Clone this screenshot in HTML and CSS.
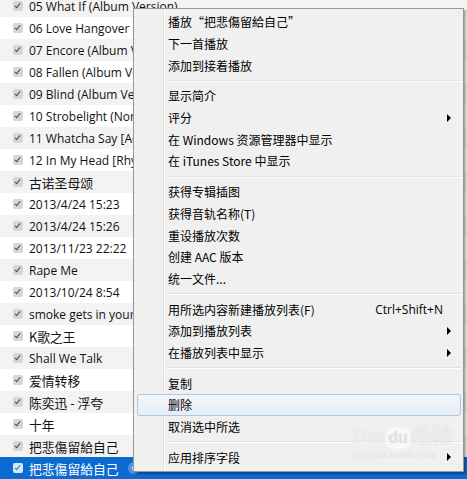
FILE: index.html
```html
<!DOCTYPE html>
<html lang="zh-CN">
  <head>
    <meta charset="UTF-8" />
    <meta name="viewport" content="width=device-width, initial-scale=1.0" />
    <title>iTunes</title>
    <link rel="stylesheet" href="styles.css">
  </head>
  <body>
    <section class="track-list">
      <div class="track"><span class="check"></span><span class="track-name">05 What If (Album Version)</span></div>
      <div class="track"><span class="check"></span><span class="track-name">06 Love Hangover (Album Version)</span></div>
      <div class="track"><span class="check"></span><span class="track-name">07 Encore (Album Version)</span></div>
      <div class="track"><span class="check"></span><span class="track-name">08 Fallen (Album Version)</span></div>
      <div class="track"><span class="check"></span><span class="track-name">09 Blind (Album Version)</span></div>
      <div class="track"><span class="check"></span><span class="track-name">10 Strobelight (Non-Album Track)</span></div>
      <div class="track"><span class="check"></span><span class="track-name">11 Whatcha Say [Acoustic]</span></div>
      <div class="track"><span class="check"></span><span class="track-name">12 In My Head [Rhythm]</span></div>
      <div class="track"><span class="check"></span><span class="track-name cjk">古诺圣母颂</span></div>
      <div class="track"><span class="check"></span><span class="track-name">2013/4/24 15:23</span></div>
      <div class="track"><span class="check"></span><span class="track-name">2013/4/24 15:26</span></div>
      <div class="track"><span class="check"></span><span class="track-name">2013/11/23 22:22</span></div>
      <div class="track"><span class="check"></span><span class="track-name">Rape Me</span></div>
      <div class="track"><span class="check"></span><span class="track-name">2013/10/24 8:54</span></div>
      <div class="track"><span class="check"></span><span class="track-name">smoke gets in your eyes</span></div>
      <div class="track"><span class="check"></span><span class="track-name cjk">K歌之王</span></div>
      <div class="track"><span class="check"></span><span class="track-name">Shall We Talk</span></div>
      <div class="track"><span class="check"></span><span class="track-name cjk">爱情转移</span></div>
      <div class="track"><span class="check"></span><span class="track-name cjk">陈奕迅 - 浮夸</span></div>
      <div class="track"><span class="check"></span><span class="track-name cjk">十年</span></div>
      <div class="track"><span class="check"></span><span class="track-name cjk">把悲傷留給自己</span></div>
      <div class="track selected"><span class="check"></span><span class="track-name cjk">把悲傷留給自己</span><span class="more-dot"></span></div>
    </section>

    <div class="context-menu">
      <div class="menu-item">播放“把悲傷留給自己”</div>
      <div class="menu-item">下一首播放</div>
      <div class="menu-item">添加到接着播放</div>
      <div class="menu-sep"></div>
      <div class="menu-item">显示简介</div>
      <div class="menu-item has-sub">评分</div>
      <div class="menu-item">在 Windows 资源管理器中显示</div>
      <div class="menu-item">在 iTunes Store 中显示</div>
      <div class="menu-sep"></div>
      <div class="menu-item">获得专辑插图</div>
      <div class="menu-item">获得音轨名称(T)</div>
      <div class="menu-item">重设播放次数</div>
      <div class="menu-item">创建 AAC 版本</div>
      <div class="menu-item">统一文件...</div>
      <div class="menu-sep"></div>
      <div class="menu-item">用所选内容新建播放列表(F)<span class="shortcut">Ctrl+Shift+N</span></div>
      <div class="menu-item has-sub">添加到播放列表</div>
      <div class="menu-item has-sub">在播放列表中显示</div>
      <div class="menu-sep"></div>
      <div class="menu-item">复制</div>
      <div class="menu-item hover">删除</div>
      <div class="menu-item">取消选中所选</div>
      <div class="menu-sep"></div>
      <div class="menu-item has-sub">应用排序字段</div>
    </div>

    <!-- watermark -->
    <div class="watermark">
      <div class="wm-logo">Bai<span class="wm-du">du</span>经验</div>
      <div class="wm-url">jingyan.baidu.com</div>
    </div>
  </body>
</html>
```

FILE: styles.css
```css
body {
  margin: 0;
  width: 467px;
  height: 479px;
  overflow: hidden;
  position: relative;
  background: #fff;
  font-family: "Open Sans", "Noto Sans CJK SC", sans-serif;
  color: #111;
}

.track-list {
  display: flex;
  flex-direction: column;
  margin-top: -5px;
}

.track {
  height: 22px;
  display: flex;
  align-items: center;
  padding-left: 13px;
  gap: 6px;
  font-size: 12px;
  background: #fff;
  white-space: nowrap;
}

.track:nth-child(odd) {
  background: #f3f3f3;
}

.track-name.cjk {
  font-family: "Noto Sans CJK SC", sans-serif;
  font-size: 12.8px;
}

.check {
  width: 10px;
  height: 10px;
  border-radius: 2px;
  background: #d6d6d6;
  position: relative;
  flex: none;
}

/* check mark */
.check::after {
  content: "";
  position: absolute;
  left: 3px;
  top: 1px;
  width: 2px;
  height: 5px;
  border: solid #4a4a4a;
  border-width: 0 1.5px 1.5px 0;
  transform: rotate(40deg);
}

.track.selected {
  background: #0b6bd3;
  color: #fff;
}

.track.selected .check {
  background: #d7e6f8;
}

.track.selected .check::after {
  border-color: #2a6fc4;
}

.more-dot {
  width: 12px;
  height: 12px;
  border-radius: 50%;
  background: #4f95e6;
  margin-left: 3px;
  position: relative;
}

.more-dot::after {
  content: "";
  position: absolute;
  left: 4px;
  top: 4px;
  width: 4px;
  height: 4px;
  border-radius: 50%;
  background: #e8f2ff;
}

.context-menu {
  position: absolute;
  left: 133px;
  top: 8px;
  width: 325px;
  height: 458px;
  padding: 2px;
  border: 1px solid #979797;
  background-color: #f0f0f0;
  background-image: linear-gradient(to right, transparent 29px, #e2e3e3 29px, #e2e3e3 30px, #fff 30px, #fff 31px, transparent 31px);
  box-shadow: 2px 2px 2px rgba(0, 0, 0, 0.35);
  font-family: "Noto Sans CJK SC", sans-serif;
  font-size: 12px;
  color: #000;
}

.menu-item {
  height: 21.7px;
  display: flex;
  align-items: center;
  padding-left: 32px;
  padding-right: 18px;
  position: relative;
  white-space: nowrap;
  box-sizing: border-box;
}

.menu-item.has-sub::after {
  content: "";
  position: absolute;
  right: 10px;
  top: 7px;
  border-left: 4px solid #000;
  border-top: 4px solid transparent;
  border-bottom: 4px solid transparent;
}

.shortcut {
  margin-left: auto;
  font-family: "Open Sans", sans-serif;
  margin-right: 0;
}

.menu-item.hover {
  background: linear-gradient(#f3f6fb, #e6edf6);
  border: 1px solid #aec6e2;
  border-radius: 3px;
  margin-left: 1px;
  padding-left: 30px;
}

.menu-sep {
  height: 9px;
  margin-left: 30px;
  background: linear-gradient(transparent 4px, #e0e0e0 4px, #e0e0e0 5px, #fff 5px, #fff 6px, transparent 6px);
}

.watermark {
  position: absolute;
  left: 353px;
  top: 425px;
  color: rgba(255, 255, 255, 0.7);
  text-shadow: 0 0 1px rgba(0, 0, 0, 0.18);
  pointer-events: none;
}

.wm-logo {
  font-family: "Liberation Sans", sans-serif;
  font-weight: bold;
  font-size: 20px;
  line-height: 22px;
}

.wm-du {
  display: inline-block;
  background: rgba(255, 255, 255, 0.55);
  color: rgba(230, 230, 230, 0.9);
  border-radius: 8px;
  padding: 0 2px;
  margin: 0 2px;
  font-size: 16px;
}

.wm-url {
  font-family: "Liberation Serif", serif;
  font-size: 10px;
  letter-spacing: 0.5px;
}
```
